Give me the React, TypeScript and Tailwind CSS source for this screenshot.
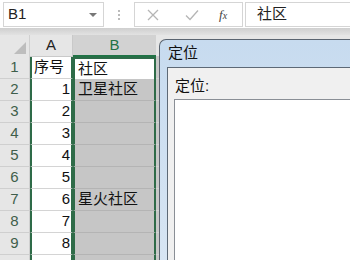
import React from "react";

const rows: [string, string, string][] = [
  ["1", "序号", "社区"],
  ["2", "1", "卫星社区"],
  ["3", "2", ""],
  ["4", "3", ""],
  ["5", "4", ""],
  ["6", "5", ""],
  ["7", "6", "星火社区"],
  ["8", "7", ""],
  ["9", "8", ""],
  ["", "", ""],
];

function FormulaBar() {
  return (
    <div className="flex h-[28px] items-stretch bg-white pt-[2px] pb-[1px]">
      <div className="ml-[3px] flex w-[101px] items-center justify-between border border-[#d5d5d5] bg-white pl-[4px] pr-[6px] text-[15px] text-[#222]">
        <span>B1</span>
        <span className="h-0 w-0 border-x-[4px] border-t-[4px] border-x-transparent border-t-[#777]" />
      </div>
      <div className="flex w-[30px] flex-col items-center justify-center gap-[2px]">
        <span className="h-[2px] w-[2px] bg-[#bbb]" />
        <span className="h-[2px] w-[2px] bg-[#bbb]" />
        <span className="h-[2px] w-[2px] bg-[#bbb]" />
      </div>
      <div className="flex w-[109px] items-center border border-[#d5d5d5] bg-white">
        <svg width="12" height="12" viewBox="0 0 12 12" className="ml-[12px]">
          <path d="M1 1L11 11M11 1L1 11" stroke="#b5b5b5" strokeWidth="1.3" />
        </svg>
        <svg width="14" height="12" viewBox="0 0 14 12" className="ml-[26px]">
          <path d="M1 6.5L5 10.5L13 1.5" stroke="#b5b5b5" strokeWidth="1.3" fill="none" />
        </svg>
        <span className="ml-[20px] font-['Liberation_Serif',serif] text-[13px] italic text-[#444]">
          f<span className="text-[10px]">x</span>
        </span>
      </div>
      <div className="ml-[2px] flex flex-1 items-center border border-[#d5d5d5] border-r-0 bg-white pl-[11px] text-[15px] text-[#222]">
        社区
      </div>
    </div>
  );
}

function Sheet() {
  return (
    <div className="flex flex-col">
      <div className="h-[7px] bg-gradient-to-b from-[#cfcfcf] to-[#e2e2e2]" />
      <div className="flex h-[22px] bg-[#e6e6e6] text-[15px]">
        <div className="flex w-[30px] items-end justify-end border-r border-[#d0d0d0] pb-[3px] pr-[3px]">
          <svg width="12" height="12" viewBox="0 0 12 12">
            <path d="M12 0L12 12L0 12Z" fill="#bdbdbd" />
          </svg>
        </div>
        <div className="flex w-[43px] items-center justify-center border-b border-r border-[#c9c9c9] text-[#222]">A</div>
        <div className="flex w-[83px] items-center justify-center border-b-2 border-[#217346] bg-[#d2d2d2] text-[#217346]">B</div>
        <div className="flex-1 border-b border-[#c9c9c9]" />
      </div>
      {rows.map(([n, a, b], i) => (
        <div key={i} className="flex h-[22px] text-[15px]">
          <div className="flex w-[30px] items-center justify-center border-b border-r border-[#cfcfcf] bg-[#e6e6e6] text-[#3f5e4b]">
            {n}
          </div>
          <div
            className={`flex w-[43px] items-center border-x-2 border-x-[#2e6b48] border-b border-b-[#d4d4d4] bg-white pr-[1px] text-[#111] ${
              i === 0 ? "justify-start pl-[2px]" : "justify-end"
            }`}
          >
            {a}
          </div>
          <div
            className={`flex w-[83px] items-center border-x-2 border-x-[#2e6b48] pl-[3px] text-[#111] ${
              i === 0 ? "border-t-2 border-t-[#2e6b48] bg-white" : "border-b border-b-[#b4b4b4] bg-[#c6c6c6]"
            }`}
          >
            {b}
          </div>
          <div className="flex-1 border-b border-[#d4d4d4] bg-[#c8c8c8]" />
        </div>
      ))}
    </div>
  );
}

function GotoDialog() {
  return (
    <div className="absolute bottom-0 left-[159px] right-0 top-[39px] flex flex-col rounded-tl-[7px] border-l border-t border-[#5a6470] bg-gradient-to-b from-[#c7dbef] to-[#d7e5f3]">
      <div className="flex h-[27px] shrink-0 items-center pl-[8px] text-[15px] text-[#111]">定位</div>
      <div className="ml-[7px] flex flex-1 flex-col border-l border-t border-[#5d6976] bg-[#f0f0f0] pl-[6px]">
        <div className="flex h-[31px] items-center pt-[6px] pl-[1px] text-[15px] text-[#111]">定位:</div>
        <div className="flex-1 border-l border-t border-[#8a8f96] bg-white" />
      </div>
    </div>
  );
}

export default function App() {
  return (
    <div className="relative h-[260px] w-[350px] overflow-hidden bg-white font-['Liberation_Sans','Noto_Sans_CJK_SC',sans-serif]">
      <FormulaBar />
      <Sheet />
      <GotoDialog />
    </div>
  );
}
